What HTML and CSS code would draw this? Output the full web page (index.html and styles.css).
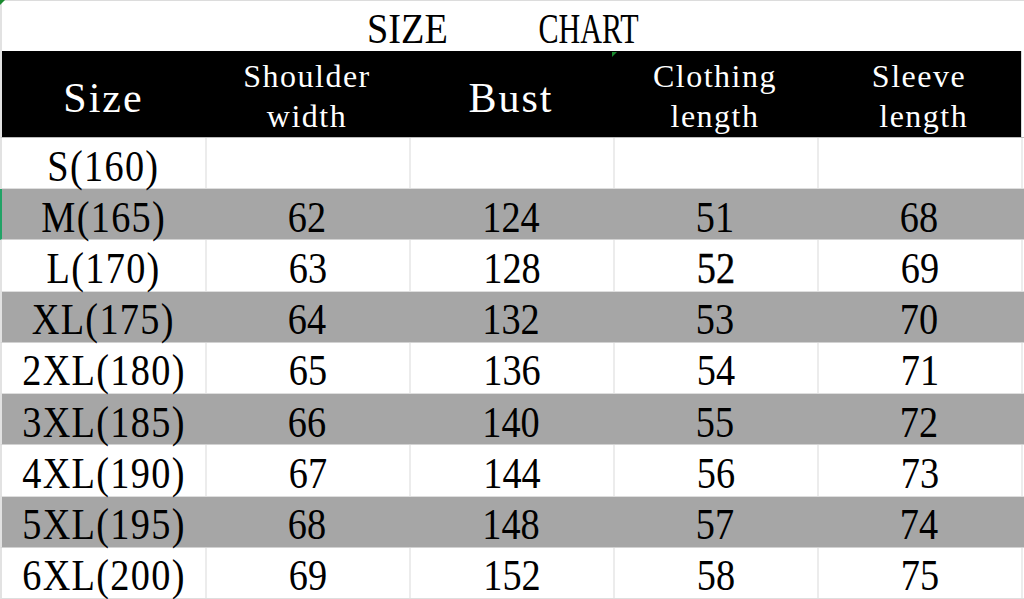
FILE: index.html
```html
<!DOCTYPE html>
<html>
<head>
<meta charset="utf-8">
<title>Size Chart</title>
<link rel="stylesheet" href="styles.css">
</head>
<body>
<div class="sheet">
  <div class="title"><span class="w w1">SIZE</span><span class="w w2">CHART</span></div>
  <div class="head">
    <div class="hc"><span class="big">Size</span></div>
    <div class="hc"><span class="two">Shoulder<br>width</span></div>
    <div class="hc"><span class="big">Bust</span></div>
    <div class="hc"><span class="two">Clothing<br>length</span></div>
    <div class="hc"><span class="two">Sleeve<br>&nbsp;length</span></div>
    <div class="hc end"></div>
  </div>
  <div class="rows">
    <div class="row"><div class="c"><span class="lab">S(160)</span></div><div class="c"></div><div class="c"></div><div class="c"></div><div class="c"></div><div class="c"></div></div>
    <div class="row g sel"><div class="c"><span class="lab">M(165)</span></div><div class="c"><span>62</span></div><div class="c"><span>124</span></div><div class="c"><span>51</span></div><div class="c"><span>68</span></div><div class="c"></div></div>
    <div class="row"><div class="c"><span class="lab">L(170)</span></div><div class="c"><span>63</span></div><div class="c"><span>128</span></div><div class="c"><span class="dk">52</span></div><div class="c"><span>69</span></div><div class="c"></div></div>
    <div class="row g"><div class="c"><span class="lab">XL(175)</span></div><div class="c"><span>64</span></div><div class="c"><span>132</span></div><div class="c"><span>53</span></div><div class="c"><span>70</span></div><div class="c"></div></div>
    <div class="row"><div class="c"><span class="lab">2XL(180)</span></div><div class="c"><span>65</span></div><div class="c"><span>136</span></div><div class="c"><span>54</span></div><div class="c"><span>71</span></div><div class="c"></div></div>
    <div class="row g"><div class="c"><span class="lab">3XL(185)</span></div><div class="c"><span>66</span></div><div class="c"><span>140</span></div><div class="c"><span>55</span></div><div class="c"><span>72</span></div><div class="c"></div></div>
    <div class="row"><div class="c"><span class="lab">4XL(190)</span></div><div class="c"><span>67</span></div><div class="c"><span>144</span></div><div class="c"><span>56</span></div><div class="c"><span>73</span></div><div class="c"></div></div>
    <div class="row g"><div class="c"><span class="lab">5XL(195)</span></div><div class="c"><span>68</span></div><div class="c"><span>148</span></div><div class="c"><span>57</span></div><div class="c"><span>74</span></div><div class="c"></div></div>
    <div class="row"><div class="c"><span class="lab">6XL(200)</span></div><div class="c"><span>69</span></div><div class="c"><span>152</span></div><div class="c"><span>58</span></div><div class="c"><span>75</span></div><div class="c"></div></div>
  </div>
</div>
<div class="mark mark-a"></div>
<div class="mark mark-b"></div>
</body>
</html>
```
FILE: styles.css
```css
* { box-sizing: border-box; margin: 0; padding: 0; }
html, body { width: 1024px; height: 599px; overflow: hidden; background: #fff; }
body { font-family: "Liberation Serif", "Times New Roman", serif; color: #000; position: relative; }

.sheet { display: flex; flex-direction: column; height: 599px; }

.title {
  flex: none;
  height: 51px;
  border-top: 1px solid #dcdcdc;
  border-left: 2px solid #e2e2e2;
  display: flex;
  justify-content: center;
  gap: 65px;
  padding-top: 6px;
  padding-right: 4px;
  font-size: 43px;
  line-height: 43px;
  white-space: nowrap;
}
.w { display: inline-block; }
.w1 { transform: scaleX(.89); }
.w2 { transform: scaleX(.70); }

.head {
  flex: none;
  display: grid;
  grid-template-columns: 203px 204px 204px 204px 204px 3px;
  height: 87px;
  border-left: 2px solid #e2e2e2;
  border-bottom: 1px solid #bcbcbc;
  color: #fff;
  white-space: nowrap;
}
.hc { background: #000; text-align: center; }
.hc.end { background: #fff; border-left: 1px solid #d9d9d9; }
.big {
  display: block;
  margin-top: 26px;
  font-size: 42px;
  line-height: 42px;
  letter-spacing: 2px;
}
.two {
  display: block;
  margin-top: 5px;
  font-size: 32px;
  line-height: 40px;
  letter-spacing: 1.5px;
}

.rows { flex: 1 1 0; min-height: 0; display: flex; flex-direction: column; }
.row {
  flex: 1 1 0;
  min-height: 0;
  display: grid;
  grid-template-columns: 203px 204px 204px 204px 204px 3px;
  border-left: 2px solid #e2e2e2;
  border-bottom: 1px solid #dedede;
}
.row.g { background: #a6a6a6; border-bottom-color: #d2d2d2; }
.row.sel { border-left-color: #21a366; }
.row:not(.g) .c + .c { border-left: 2px solid #ececec; }

.c {
  min-height: 0;
  display: flex;
  justify-content: center;
  align-items: center;
  padding-top: 7px;
  font-size: 44px;
  line-height: 36px;
  white-space: nowrap;
}
.c span { display: inline-block; transform: scaleX(.87); }
.c .lab { letter-spacing: 1.5px; }
.c .dk { -webkit-text-stroke: .4px #000; }

.mark {
  position: absolute;
  width: 0;
  height: 0;
  border-top: 5px solid #1a8a2e;
  border-right: 5px solid transparent;
}
.mark-a { top: 0; left: 0; }
.mark-b { top: 52px; left: 612px; }
```
